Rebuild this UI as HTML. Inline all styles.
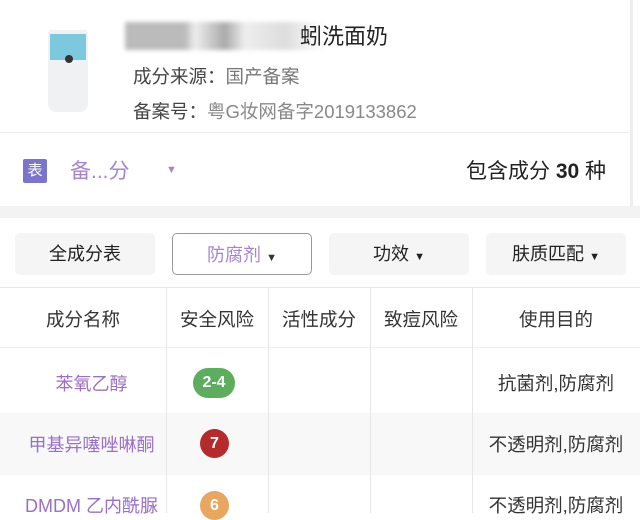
<!DOCTYPE html>
<html><head><meta charset="utf-8"><style>
*{margin:0;padding:0;box-sizing:border-box}
body{width:640px;height:513px;overflow:hidden;background:#fff;font-family:"Liberation Sans","Noto Sans CJK SC",sans-serif;position:relative;color:#333}
.a{position:absolute;white-space:nowrap}
.btn{position:absolute;top:233px;width:140px;height:42px;background:#f5f5f5;border-radius:5px;font-size:18px;color:#222;text-align:center;line-height:42px}
.vl{position:absolute;top:287px;bottom:0;width:1px;background:#e6e6e6}
.th{position:absolute;top:306px;font-size:18.5px;color:#333;text-align:center}
.badge{position:absolute;border-radius:50%;color:#fff;font-size:16px;font-weight:bold;text-align:center}
.nm{position:absolute;left:0;width:183px;text-align:center;font-size:18px;color:#9a6fc8;white-space:nowrap}
.us{position:absolute;left:472px;width:168px;text-align:center;font-size:18.5px;color:#333;white-space:nowrap}
</style></head><body>
<div class="a" style="left:48px;top:30px;width:40px;height:82px;background:#f0f1f2;border-radius:4px 4px 8px 8px"></div>
<div class="a" style="left:50px;top:34px;width:36px;height:26px;background:#7cc8dc"></div>
<div class="a" style="left:65px;top:55px;width:8px;height:8px;border-radius:50%;background:#333"></div>
<div class="a" style="left:125px;top:22px;width:200px;height:28px;background:linear-gradient(90deg,#bbb 0,#bbb 30%,#eee 35%,#aaa 50%,#eee 60%,#ddd 80%,#fff 100%);filter:blur(2px)"></div>
<div class="a" style="left:300px;top:19px;font-size:22px;color:#222">蚓洗面奶</div>
<div class="a" style="left:133px;top:63px;font-size:18.5px;color:#444">成分来源：<span style="color:#777">国产备案</span></div>
<div class="a" style="left:133px;top:98px;font-size:18.5px;color:#444">备案号：<span style="color:#888">粤G妆网备字2019133862</span></div>
<div class="a" style="left:0;top:132px;width:632px;height:1px;background:#eee"></div>
<div class="a" style="left:630px;top:0;width:3px;height:210px;background:#eee"></div>
<div class="a" style="left:23px;top:159px;width:24px;height:24px;background:#7b74cc;color:#fff;font-size:15px;text-align:center;line-height:24px;border-radius:2px">表</div>
<div class="a" style="left:70px;top:155px;font-size:21px;color:#a585d0">备...分</div>
<div class="a" style="left:166px;top:164px;font-size:11px;color:#a585d0">▼</div>
<div class="a" style="left:466px;top:155px;font-size:21px;color:#222">包含成分 <b>30</b> 种</div>
<div class="a" style="left:0;top:206px;width:640px;height:12px;background:#f3f3f3"></div>
<div class="btn" style="left:15px">全成分表</div>
<div class="btn" style="left:172px;background:#fff;border:1px solid #999;color:#a585d0">防腐剂 <span style="color:#333;font-size:11px">▼</span></div>
<div class="btn" style="left:329px">功效 <span style="font-size:11px">▼</span></div>
<div class="btn" style="left:486px">肤质匹配 <span style="font-size:11px">▼</span></div>
<div class="a" style="left:0;top:287px;width:640px;height:1px;background:#e6e6e6"></div>
<div class="a" style="left:0;top:347px;width:640px;height:1px;background:#eee"></div>
<div class="a" style="left:0;top:413px;width:640px;height:62px;background:#f8f8f8"></div>
<div class="vl" style="left:166px"></div><div class="vl" style="left:268px"></div><div class="vl" style="left:370px"></div><div class="vl" style="left:472px"></div>
<div class="th" style="left:0;width:166px">成分名称</div>
<div class="th" style="left:166px;width:102px">安全风险</div>
<div class="th" style="left:268px;width:102px">活性成分</div>
<div class="th" style="left:370px;width:102px">致痘风险</div>
<div class="th" style="left:472px;width:168px">使用目的</div>
<div class="nm" style="top:370px">苯氧乙醇</div>
<div class="nm" style="top:431px">甲基异噻唑啉酮</div>
<div class="nm" style="top:492px">DMDM 乙内酰脲</div>
<div class="badge" style="left:193px;top:368px;width:42px;height:30px;border-radius:15px;background:#5cae5e;line-height:30px">2-4</div>
<div class="badge" style="left:200px;top:429px;width:29px;height:29px;background:#b52a2a;line-height:29px">7</div>
<div class="badge" style="left:200px;top:491px;width:29px;height:29px;background:#e9a65e;line-height:29px">6</div>
<div class="us" style="top:370px">抗菌剂,防腐剂</div>
<div class="us" style="top:431px">不透明剂,防腐剂</div>
<div class="us" style="top:492px">不透明剂,防腐剂</div>
</body></html>
